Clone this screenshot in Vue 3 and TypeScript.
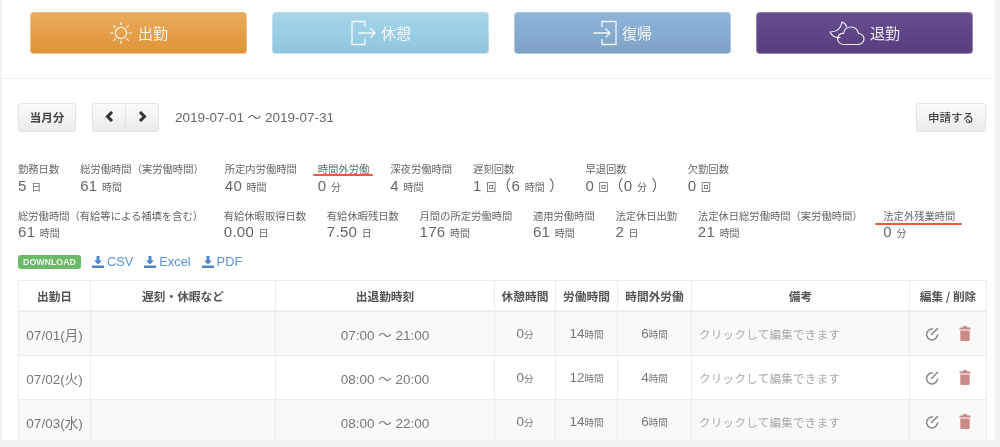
<script setup lang="ts">
interface Stat { label: string; value: string; unit: string; extra?: string; extraUnit?: string; mark?: 'short' | 'long' }
const row1: Stat[] = [
  { label: '勤務日数', value: '5', unit: '日' },
  { label: '総労働時間（実労働時間）', value: '61', unit: '時間' },
  { label: '所定内労働時間', value: '40', unit: '時間' },
  { label: '時間外労働', value: '0', unit: '分', mark: 'short' },
  { label: '深夜労働時間', value: '4', unit: '時間' },
  { label: '遅刻回数', value: '1', unit: '回', extra: '6', extraUnit: '時間' },
  { label: '早退回数', value: '0', unit: '回', extra: '0', extraUnit: '分' },
  { label: '欠勤回数', value: '0', unit: '回' },
]
const row2: Stat[] = [
  { label: '総労働時間（有給等による補填を含む）', value: '61', unit: '時間' },
  { label: '有給休暇取得日数', value: '0.00', unit: '日' },
  { label: '有給休暇残日数', value: '7.50', unit: '日' },
  { label: '月間の所定労働時間', value: '176', unit: '時間' },
  { label: '適用労働時間', value: '61', unit: '時間' },
  { label: '法定休日出勤', value: '2', unit: '日' },
  { label: '法定休日総労働時間（実労働時間）', value: '21', unit: '時間' },
  { label: '法定外残業時間', value: '0', unit: '分', mark: 'long' },
]
const statRows = [row1, row2]
const links = ['CSV', 'Excel', 'PDF']
const heads = ['出勤日', '遅刻・休暇など', '出退勤時刻', '休憩時間', '労働時間', '時間外労働', '備考', '編集 / 削除']
const rows = [
  { date: '07/01(月)', time: '07:00 ～ 21:00', work: '14', over: '6' },
  { date: '07/02(火)', time: '08:00 ～ 20:00', work: '12', over: '4' },
  { date: '07/03(水)', time: '08:00 ～ 22:00', work: '14', over: '6' },
]
</script>

<template>
  <div class="page">
    <main class="panel">
      <section class="actions">
        <button class="punch orange">
          <svg class="ico" width="24" height="26" viewBox="0 0 24 26" fill="none" stroke="currentColor" stroke-width="1.2" stroke-linecap="round">
            <circle cx="12" cy="13" r="5.6" />
            <path d="M12 2.500v2.500M12 21v2.500M1.500 13h2.500M20 13h2.500M4.600 5.600l1.700 1.700M17.700 18.700l1.700 1.700M4.600 20.400l1.700-1.700M17.700 7.300l1.700-1.700" />
          </svg>
          <span>出勤</span>
        </button>
        <button class="punch sky">
          <svg class="ico" width="26" height="26" viewBox="0 0 26 26" fill="none" stroke="currentColor" stroke-width="1.300">
            <path d="M15 7V1.500H2v23h13V19" />
            <path d="M8.500 13H25M20.500 8.500 25 13l-4.500 4.500" />
          </svg>
          <span>休憩</span>
        </button>
        <button class="punch steel">
          <svg class="ico" width="24" height="26" viewBox="0 0 24 26" fill="none" stroke="currentColor" stroke-width="1.300">
            <path d="M9 7V1.500h14v23H9V19" />
            <path d="M0.500 13H17M12.500 8.500 17 13l-4.500 4.500" />
          </svg>
          <span>復帰</span>
        </button>
        <button class="punch violet">
          <svg class="ico" width="36" height="26" viewBox="0 0 36 26" fill="none" stroke="currentColor" stroke-width="1.200" stroke-linejoin="round" stroke-linecap="round">
            <path d="M11 17.500C7 18 3 16 1 12c7 0 11-4 12-10 2.500 1 4 2.500 4.500 4.500" />
            <path d="M15 24.500h14c3.500 0 6-2.500 6-5.500s-2.500-5.500-5.500-5.500C28.500 9.500 25.500 7 22 7c-4 0-7 2.500-7.500 6.500-3-.5-6 2-6 5.200 0 3.300 3 5.800 6.500 5.800Z" />
          </svg>
          <span>退勤</span>
        </button>
      </section>

      <section class="content">
        <div class="toolbar">
          <button class="btn month">当月分</button>
          <div class="pager">
            <button class="btn arrow">
              <svg width="9" height="11" viewBox="0 0 9 11" fill="none" stroke="#333" stroke-width="3"><path d="M7 1 2.500 5.500 7 10" /></svg>
            </button>
            <button class="btn arrow">
              <svg width="9" height="11" viewBox="0 0 9 11" fill="none" stroke="#333" stroke-width="3"><path d="M2 1l4.500 4.500L2 10" /></svg>
            </button>
          </div>
          <span class="range">2019-07-01 ～ 2019-07-31</span>
          <button class="btn apply">申請する</button>
        </div>

        <div v-for="(r, i) in statRows" :key="i" class="stats">
          <div v-for="s in r" :key="s.label" class="stat">
            <div class="label">{{ s.label }}</div>
            <div class="value">
              {{ s.value }} <small>{{ s.unit }}</small>
              <template v-if="s.extra">（{{ s.extra }} <small>{{ s.extraUnit }}</small> ）</template>
            </div>
            <i v-if="s.mark" class="mark" :class="s.mark"></i>
          </div>
        </div>

        <div class="downloads">
          <span class="badge">DOWNLOAD</span>
          <a v-for="l in links" :key="l" class="dl">
            <svg width="12" height="12" viewBox="0 0 12 12" fill="#4a86c8"><path d="M4.500 0h3v4.500H10L6 8.500 2 4.500h2.500ZM0 9.500h12V12H0Z" /></svg>
            {{ l }}
          </a>
        </div>

        <table class="sheet">
          <colgroup>
            <col class="c1" /><col class="c2" /><col class="c3" /><col class="c4" />
            <col class="c5" /><col class="c6" /><col class="c7" /><col class="c8" />
          </colgroup>
          <thead>
            <tr><th v-for="h in heads" :key="h">{{ h }}</th></tr>
          </thead>
          <tbody>
            <tr v-for="row in rows" :key="row.date">
              <td class="mid">{{ row.date }}</td>
              <td></td>
              <td class="mid">{{ row.time }}</td>
              <td class="mid">0<small>分</small></td>
              <td class="mid">{{ row.work }}<small>時間</small></td>
              <td class="mid">{{ row.over }}<small>時間</small></td>
              <td class="note">クリックして編集できます</td>
              <td class="ops">
                <svg width="14" height="14" viewBox="0 0 14 14" fill="none" stroke="#8a8a8a" stroke-width="1.600" stroke-linecap="round">
                  <path d="M12.500 8A5.500 5.500 0 1 1 7.500 2" />
                  <path d="M6.500 7.500 12.500 1.500" />
                </svg>
                <svg width="12" height="15" viewBox="0 0 12 15" fill="#cb8b8b">
                  <path d="M4.300 0h3.400l.6 1.500H11.500V3.500H.5V1.500h3.200ZM1.300 4.500h9.400v9a1.500 1.500 0 0 1-1.500 1.500H2.800a1.500 1.500 0 0 1-1.500-1.500Z" />
                </svg>
              </td>
            </tr>
          </tbody>
        </table>
      </section>
    </main>
  </div>
</template>

<style scoped>
.page {
  width: 1000px;
  height: 447px;
  overflow: hidden;
  background: #f2f2f2;
  font-family: "Liberation Sans", "Noto Sans CJK JP", sans-serif;
  color: #666;
  filter: blur(0.6px);
}
.panel {
  width: 993px;
  height: 440px;
  margin-left: 2px;
  background: #fff;
  overflow: hidden;
}
.actions {
  display: grid;
  grid-template-columns: repeat(4, 217px);
  column-gap: 25px;
  height: 79px;
  padding: 12px 0 0 28px;
  box-sizing: border-box;
  border-bottom: 1px solid #f1f1f1;
}
.punch {
  display: flex;
  align-items: center;
  justify-content: center;
  gap: 5px;
  height: 42px;
  border: 1px solid rgba(255, 255, 255, 0.35);
  border-radius: 4px;
  color: rgba(255, 255, 255, 0.9);
  font: 15px "Noto Sans CJK JP", sans-serif;
  padding: 0;
}
.punch span { margin-top: -2px; }
.orange { background: linear-gradient(#e8ab5c, #e09438); }
.sky { background: linear-gradient(#a6d5e9, #8fc6de); }
.steel { background: linear-gradient(#8db4da, #7ea2c6); }
.violet { background: linear-gradient(#664e8e, #573f7e); }
.content { padding: 24px 9px 0 16px; }
.toolbar { display: flex; align-items: center; height: 29px; }
.btn {
  height: 29px;
  border: 1px solid #e4e4e4;
  border-radius: 3px;
  background: linear-gradient(#fbfbfb, #ebebeb);
  color: #444;
  font: 700 11.500px "Noto Sans CJK JP", sans-serif;
  padding: 0 0 2px;
}
.month { width: 58px; }
.pager { display: flex; margin-left: 16px; }
.arrow { width: 34px; display: flex; align-items: center; justify-content: center; }
.arrow:first-child { border-radius: 3px 0 0 3px; }
.arrow:last-child { border-radius: 0 3px 3px 0; border-left: 0; width: 33px; }
.range { margin: -4px 0 0 16px; font-size: 13.500px; color: #666; }
.apply { width: 70px; margin-left: auto; font-weight: 500; }
.stats { display: flex; gap: 21px; }
.stats:nth-of-type(2) { margin-top: 30px; }
.stats:nth-of-type(3) { margin-top: 13px; gap: 20.700px; }
.stats:nth-of-type(3) .value { margin-top: -1px; }
.stat { position: relative; white-space: nowrap; }
.label { font-size: 10.300px; line-height: 15px; color: #666; }
.value { font-size: 15px; line-height: 17px; color: #666; letter-spacing: 0.3px; }
.value small { font-size: 10px; letter-spacing: 0; }
.mark {
  position: absolute;
  height: 2px;
  background: #ef5a3c;
  border-radius: 1px;
}
.mark.short { left: -5px; right: -4px; top: 12px; }
.mark.long { left: -8px; right: -7px; top: 14px; }
.downloads { display: flex; align-items: center; height: 15px; margin-top: 12px; }
.badge {
  width: 63px;
  height: 14px;
  background: #6cb96a;
  border-radius: 3px;
  color: #eaf6e8;
  font-size: 8.800px;
  font-weight: 700;
  line-height: 14px;
  text-align: center;
}
.dl { display: flex; align-items: center; gap: 3px; margin-left: 11px; font-size: 12.800px; color: #5b93d3; }
.sheet {
  width: 968px;
  margin-top: 11px;
  table-layout: fixed;
  border-collapse: collapse;
  border: 1px solid #ececec;
}
.c1 { width: 72px; }
.c2 { width: 185px; }
.c3 { width: 219px; }
.c4 { width: 61px; }
.c5 { width: 62px; }
.c6 { width: 74px; }
.c7 { width: 218px; }
.c8 { width: 77px; }
th, td { border: 1px solid #ececec; padding: 0; }
th {
  height: 29px;
  border-bottom-width: 2px;
  font: 700 11.700px "Noto Sans CJK JP", sans-serif;
  color: #555;
  text-align: center;
}
td { height: 43px; font-size: 13.500px; color: #777; }
tbody tr:nth-child(odd) td { background: #f9f9f9; }
td small { font-size: 9.500px; }
.mid { text-align: center; }
.note { padding-left: 7px; font-size: 11.500px; color: #aaa; letter-spacing: 0.3px; }
.ops svg { vertical-align: middle; margin-left: 15px; }
.ops svg + svg { margin-left: 20px; }
</style>
